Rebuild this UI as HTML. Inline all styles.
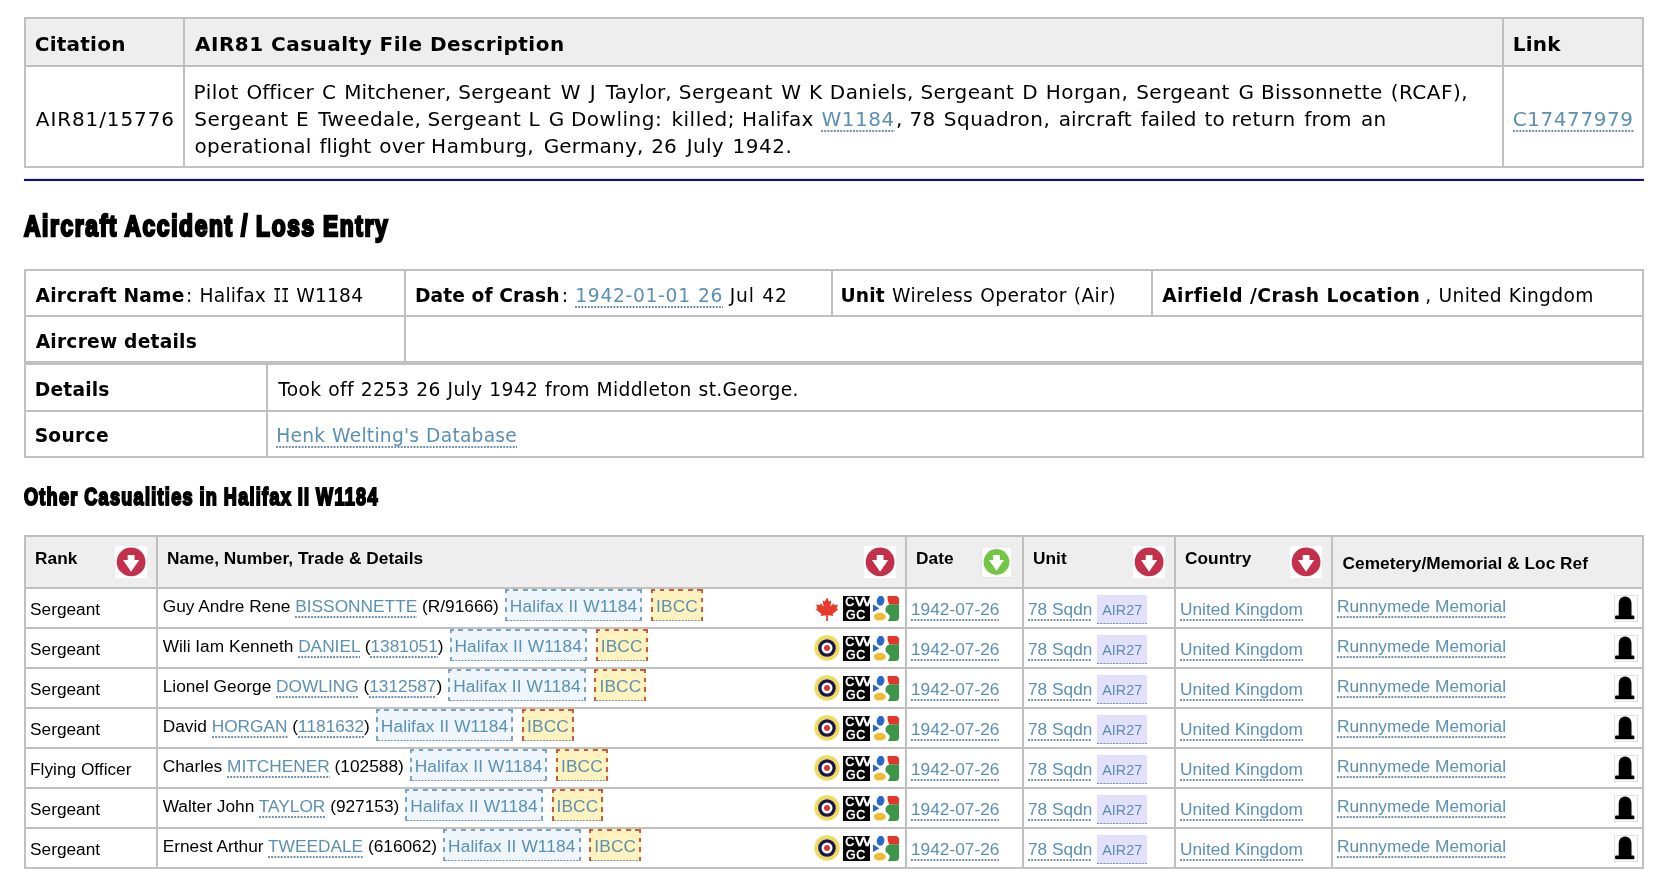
<!DOCTYPE html>
<html lang="en">
<head>
<meta charset="utf-8">
<title>Aircraft Accident / Loss Entry</title>
<style>
html,body{margin:0;padding:0;background:#fff;}
body{width:1668px;height:891px;position:relative;overflow:hidden;will-change:transform;font-family:"DejaVu Sans","Liberation Sans",sans-serif;font-size:20px;color:#000;}
a{color:#5b90b5;text-decoration:none;padding-bottom:2px;background:repeating-linear-gradient(90deg,rgba(112,142,168,.5) 0,rgb(112,142,168) .5px,rgb(112,142,168) 1.4px,rgba(112,142,168,0) 2.4px,rgba(112,142,168,0) 2.7px,rgba(112,142,168,.5) 3.2px) 0 100%/100% 2px no-repeat;}
table{border-collapse:collapse;table-layout:fixed;position:absolute;}
td,th{border:2px solid #c0c0c0;padding:0 0 0 10px;text-align:left;vertical-align:middle;box-sizing:border-box;overflow:hidden;white-space:nowrap;}
th{background:#eee;font-weight:bold;}
.v{font-family:"DejaVu Sans","Liberation Sans",sans-serif;font-size:20px;}
.r{position:absolute;white-space:pre;line-height:24px;font-size:20px;}
#t2 .r,#t3 .r{line-height:21px;font-size:18.67px;}
.r.ii{font-family:"DejaVu Sans Mono","DejaVu Sans",monospace;transform:scaleX(0.75);transform-origin:0 50%;}
.r a{display:inline-block;line-height:22px;vertical-align:baseline;}
#t2 .r a,#t3 .r a{line-height:21px;}
h2,h3{position:absolute;margin:0;font-family:"Liberation Sans",sans-serif;font-weight:bold;white-space:nowrap;transform-origin:0 50%;color:#000;}
#h2{left:24px;top:206px;font-size:30px;line-height:40px;-webkit-text-stroke:2.6px #000;letter-spacing:2.2px;word-spacing:-1px;transform:scaleX(0.757);}
#h3{left:24px;top:481px;font-size:24.2px;line-height:32px;-webkit-text-stroke:2.1px #000;letter-spacing:1.75px;word-spacing:-0.8px;transform:scaleX(0.745);}
#t1{left:24px;top:17px;width:1618px;}
#t2{left:24px;top:269px;width:1618px;font-size:18.67px;}
#t3{left:24px;top:363px;width:1618px;font-size:18.67px;}
#hr{position:absolute;left:24px;top:178px;width:1620px;height:3px;background:linear-gradient(180deg,#e4e4fa 0,#e4e4fa 1px,#0c0c8c 1px,#0c0c8c 3px);}

#t4{left:24px;top:535px;width:1618px;font-family:"Liberation Sans",sans-serif;font-size:17.3px;}
#t4 th{padding:0 8px 0 9px;letter-spacing:0.04px;font-size:17.25px;vertical-align:top;height:52px;line-height:20px;position:relative;}
#t4 th .tx{display:block;padding-top:11px;}
#t4 th.lo .tx{padding-top:16px;padding-left:0.5px;}
#t4 th .si{position:absolute;right:9px;top:9px;width:32px;height:32px;}
#t4 th .si svg{display:block;}
#t4 td{padding:0 0 0 4px;vertical-align:top;height:40px;line-height:20px;}
#t4 td.rk,#t4 td.c{padding-top:10px;}
#t4 td.nm{padding-top:0;padding-left:4.7px;position:relative;}
.bd.hx{margin-left:1.2px;}
#t4 td.cm{padding-top:7px;position:relative;}
.bd{display:inline-block;box-sizing:border-box;height:32px;line-height:20px;letter-spacing:0.12px;padding:7px 5px 0 5px;margin:0 2px;vertical-align:baseline;background:repeating-linear-gradient(90deg,#7da3c2 0,#7da3c2 4.75px,transparent 4.75px,transparent 9.5px) -1px 0/calc(100% + 1px) 2px no-repeat,repeating-linear-gradient(180deg,#7da3c2 0,#7da3c2 4.75px,transparent 4.75px,transparent 9.5px) 0 -1px/2px calc(100% + 1px) no-repeat,repeating-linear-gradient(180deg,#7da3c2 0,#7da3c2 4.75px,transparent 4.75px,transparent 9.5px) 100% -1px/2px calc(100% + 1px) no-repeat,repeating-linear-gradient(90deg,rgba(112,142,168,.5) 0,rgb(112,142,168) .5px,rgb(112,142,168) 1.4px,rgba(112,142,168,0) 2.4px,rgba(112,142,168,0) 2.7px,rgba(112,142,168,.5) 3.2px) 2px 100%/calc(100% - 4px) 1.4px no-repeat,#eef6fc;}
.bd.ib{background:repeating-linear-gradient(90deg,#cc5a3c 0,#cc5a3c 4.75px,transparent 4.75px,transparent 9.5px) -1px 0/calc(100% + 1px) 2px no-repeat,repeating-linear-gradient(180deg,#cc5a3c 0,#cc5a3c 4.75px,transparent 4.75px,transparent 9.5px) 0 -1px/2px calc(100% + 1px) no-repeat,repeating-linear-gradient(180deg,#cc5a3c 0,#cc5a3c 4.75px,transparent 4.75px,transparent 9.5px) 100% -1px/2px calc(100% + 1px) no-repeat,repeating-linear-gradient(90deg,rgba(112,142,168,.5) 0,rgb(112,142,168) .5px,rgb(112,142,168) 1.4px,rgba(112,142,168,0) 2.4px,rgba(112,142,168,0) 2.7px,rgba(112,142,168,.5) 3.2px) 2px 100%/calc(100% - 4px) 1.4px no-repeat,#fef3be;}
.air{font-size:14.4px;padding:7px 4.5px 6px 5px;background:repeating-linear-gradient(90deg,rgba(112,142,168,.5) 0,rgb(112,142,168) .5px,rgb(112,142,168) 1.4px,rgba(112,142,168,0) 2.4px,rgba(112,142,168,0) 2.7px,rgba(112,142,168,.5) 3.2px) 0 100%/100% 1.5px no-repeat,#e2e0fa;}
.icons{position:absolute;right:0;top:0;height:38px;width:100px;}
.ic{position:absolute;display:block;}
.fl{left:10px;top:7.6px;height:24.4px;width:24px;}
.rf{left:9.2px;top:6.3px;}
.cw{left:38px;top:7px;width:27px;height:25px;background:#000;color:#fff;font-family:"Liberation Sans",sans-serif;font-weight:normal;-webkit-text-stroke:0.5px #fff;font-size:12.3px;line-height:12.4px;overflow:hidden;letter-spacing:0.5px;white-space:nowrap;}
.cw span{display:block;padding-left:2.2px;position:relative;top:0.3px;}
.cw .g2{padding-left:3px;letter-spacing:0.6px;}
.cw i{font-style:normal;display:inline-block;transform:scaleX(1.45);transform-origin:0 50%;}
.gg{left:68px;top:7px;}
.tb{position:absolute;right:4.5px;top:5.7px;width:23.5px;height:27px;box-sizing:border-box;box-shadow:inset 0 0 0 1px #e2e2e2;background:#fff;}
.tb svg{position:absolute;left:0;top:0;}
</style>
</head>
<body>

<table id="t1" class="v">
<colgroup><col style="width:159px"><col style="width:1319px"><col style="width:140px"></colgroup>
<tr style="height:48px"><th><b class="r" style="left:9.76px;top:14px;letter-spacing:0.240px;">Citation</b></th><th><b class="r" style="left:170.00px;top:14px;letter-spacing:0.484px;">AIR81 Casualty File Description</b></th><th><b class="r" style="left:1487.64px;top:14px;letter-spacing:0.258px;">Link</b></th></tr>
<tr style="height:101px"><td><span class="r" style="left:10.80px;top:89px;letter-spacing:0.898px;">AIR81/15776</span></td><td><span class="r" style="left:168.62px;top:62px;letter-spacing:0.500px">Pilot</span> <span class="r" style="left:221.46px;top:62px;letter-spacing:0.050px">Officer</span> <span class="r" style="left:297.06px;top:62px;letter-spacing:0.000px">C</span> <span class="r" style="left:319.23px;top:62px;letter-spacing:0.073px">Mitchener,</span> <span class="r" style="left:433.25px;top:62px;letter-spacing:0.292px">Sergeant</span> <span class="r" style="left:535.77px;top:62px;letter-spacing:0.000px">W</span> <span class="r" style="left:564.85px;top:62px;letter-spacing:0.000px">J</span> <span class="r" style="left:580.81px;top:62px;letter-spacing:0.081px">Taylor,</span> <span class="r" style="left:653.85px;top:62px;letter-spacing:0.407px">Sergeant</span> <span class="r" style="left:756.17px;top:62px;letter-spacing:0.000px">W</span> <span class="r" style="left:784.12px;top:62px;letter-spacing:0.000px">K</span> <span class="r" style="left:804.83px;top:62px;letter-spacing:0.445px">Daniels,</span> <span class="r" style="left:895.55px;top:62px;letter-spacing:0.378px">Sergeant</span> <span class="r" style="left:997.22px;top:62px;letter-spacing:0.000px">D</span> <span class="r" style="left:1020.72px;top:62px;letter-spacing:0.500px">Horgan,</span> <span class="r" style="left:1111.25px;top:62px;letter-spacing:0.364px">Sergeant</span> <span class="r" style="left:1213.46px;top:62px;letter-spacing:0.000px">G</span> <span class="r" style="left:1236.03px;top:62px;letter-spacing:0.333px">Bissonnette</span> <span class="r" style="left:1365.64px;top:62px;letter-spacing:0.500px">(RCAF),</span><br><span class="r" style="left:169.25px;top:89px;letter-spacing:0.450px">Sergeant</span> <span class="r" style="left:270.93px;top:89px;letter-spacing:0.000px">E</span> <span class="r" style="left:293.21px;top:89px;letter-spacing:0.452px">Tweedale,</span> <span class="r" style="left:402.45px;top:89px;letter-spacing:0.378px">Sergeant</span> <span class="r" style="left:503.62px;top:89px;letter-spacing:0.000px">L</span> <span class="r" style="left:523.66px;top:89px;letter-spacing:0.000px">G</span> <span class="r" style="left:545.92px;top:89px;letter-spacing:0.500px">Dowling:</span> <span class="r" style="left:646.44px;top:89px;letter-spacing:0.500px">killed;</span> <span class="r" style="left:717.12px;top:89px;letter-spacing:0.287px">Halifax</span> <span class="r" style="left:796.48px;top:89px;letter-spacing:0.500px"><a>W1184</a></span><span class="r" style="left:870.95px;top:89px;letter-spacing:0.000px">,</span> <span class="r" style="left:884.44px;top:89px;letter-spacing:0.250px">78</span> <span class="r" style="left:918.75px;top:89px;letter-spacing:0.500px">Squadron,</span> <span class="r" style="left:1033.66px;top:89px;letter-spacing:0.197px">aircraft</span> <span class="r" style="left:1115.69px;top:89px;letter-spacing:0.050px">failed</span> <span class="r" style="left:1179.49px;top:89px;letter-spacing:0.250px">to</span> <span class="r" style="left:1206.44px;top:89px;letter-spacing:0.500px">return</span> <span class="r" style="left:1279.29px;top:89px;letter-spacing:0.250px">from</span> <span class="r" style="left:1335.96px;top:89px;letter-spacing:0.250px">an</span><br><span class="r" style="left:169.56px;top:116px;letter-spacing:0.301px">operational</span> <span class="r" style="left:294.39px;top:116px;letter-spacing:0.077px">flight</span> <span class="r" style="left:354.16px;top:116px;letter-spacing:0.250px">over</span> <span class="r" style="left:406.12px;top:116px;letter-spacing:0.500px">Hamburg,</span> <span class="r" style="left:518.66px;top:116px;letter-spacing:0.189px">Germany,</span> <span class="r" style="left:626.15px;top:116px;letter-spacing:0.250px">26</span> <span class="r" style="left:661.85px;top:116px;letter-spacing:0.250px">July</span> <span class="r" style="left:707.51px;top:116px;letter-spacing:0.500px">1942.</span></td><td><span class="r" style="left:1487.66px;top:89px;letter-spacing:0.580px;"><a>C17477979</a></span></td></tr>
</table>
<div id="hr"></div>

<h2 id="h2">Aircraft Accident / Loss Entry</h2>

<table id="t2" class="v">
<colgroup><col style="width:380px"><col style="width:427px"><col style="width:320px"><col style="width:491px"></colgroup>
<tr style="height:46px"><td><b class="r" style="left:10.60px;top:15px;letter-spacing:0.174px;">Aircraft Name</b><span class="r" style="left:161.06px;top:15px;letter-spacing:0.268px;word-spacing:0.60px;">: Halifax</span> <span class="r ii" style="left:247.79px;top:15px;letter-spacing:-0.71px">II</span> <span class="r" style="left:271.32px;top:15px;letter-spacing:0.201px;">W1184</span></td><td><b class="r" style="left:389.94px;top:15px;letter-spacing:0.095px;">Date of Crash</b><span class="r" style="left:536.76px;top:15px;letter-spacing:0.000px;">:</span> <span class="r" style="left:550.26px;top:15px;letter-spacing:0.703px;word-spacing:0.60px;"><a>1942-01-01 26</a></span> <span class="r" style="left:704.67px;top:15px;letter-spacing:0.877px;word-spacing:0.60px;">Jul 42</span></td><td><b class="r" style="left:815.44px;top:15px;letter-spacing:0.185px;">Unit</b> <span class="r" style="left:867.02px;top:15px;letter-spacing:0.394px;word-spacing:0.60px;">Wireless Operator (Air)</span></td><td><b class="r" style="left:1137.20px;top:15px;letter-spacing:0.485px;">Airfield /Crash Location</b> <span class="r" style="left:1400.33px;top:15px;letter-spacing:0.354px;word-spacing:0.60px;">, United Kingdom</span></td></tr>
<tr style="height:46px"><td><b class="r" style="left:10.70px;top:61px;letter-spacing:0.215px;">Aircrew details</b></td><td colspan="3"></td></tr>
</table>

<table id="t3" class="v">
<colgroup><col style="width:242px"><col style="width:1376px"></colgroup>
<tr style="height:47px"><td><b class="r" style="left:9.74px;top:15px;letter-spacing:0.196px;">Details</b></td><td><span class="r" style="left:253.29px;top:15px;letter-spacing:0.329px;word-spacing:0.60px;">Took off 2253 26 July 1942 from Middleton st.George.</span></td></tr>
<tr style="height:46px"><td><b class="r" style="left:9.63px;top:61px;letter-spacing:0.294px;">Source</b></td><td><span class="r" style="left:251.25px;top:61px;letter-spacing:0.242px;word-spacing:0.60px;"><a>Henk Welting's Database</a></span></td></tr>
</table>

<h3 id="h3">Other Casualities in Halifax II W1184</h3>

<table id="t4">
<colgroup><col style="width:132px"><col style="width:749px"><col style="width:117px"><col style="width:152px"><col style="width:157px"><col style="width:311px"></colgroup>
<tr><th><span class="tx">Rank</span><span class="si"><svg width="32" height="32" viewBox="0 0 32 32"><rect width="32" height="32" fill="#fff"/><circle cx="16.1" cy="15.9" r="14.4" fill="#c4304b"/><path d="M12.7 8.9h6.8v5.1h4.7L16.1 25.7 8 14h4.7z" fill="#fff"/></svg></span></th><th><span class="tx">Name, Number, Trade &amp; Details</span><span class="si"><svg width="32" height="32" viewBox="0 0 32 32"><rect width="32" height="32" fill="#fff"/><circle cx="16.1" cy="15.9" r="14.4" fill="#c4304b"/><path d="M12.7 8.9h6.8v5.1h4.7L16.1 25.7 8 14h4.7z" fill="#fff"/></svg></span></th><th><span class="tx">Date</span><span class="si"><svg width="32" height="32" viewBox="0 0 32 32"><rect x="0.6" y="1" width="30.4" height="30.4" fill="#fff" stroke="#e3e3e3" stroke-width="1"/><circle cx="15.5" cy="16" r="12.9" fill="#72c643"/><path d="M12.1 8.9h6.8v5.1h4.2L15.5 24.8 7.9 14h4.2z" fill="#fff"/></svg></span></th><th><span class="tx">Unit</span><span class="si"><svg width="32" height="32" viewBox="0 0 32 32"><rect width="32" height="32" fill="#fff"/><circle cx="16.1" cy="15.9" r="14.4" fill="#c4304b"/><path d="M12.7 8.9h6.8v5.1h4.7L16.1 25.7 8 14h4.7z" fill="#fff"/></svg></span></th><th><span class="tx">Country</span><span class="si"><svg width="32" height="32" viewBox="0 0 32 32"><rect width="32" height="32" fill="#fff"/><circle cx="16.1" cy="15.9" r="14.4" fill="#c4304b"/><path d="M12.7 8.9h6.8v5.1h4.7L16.1 25.7 8 14h4.7z" fill="#fff"/></svg></span></th><th class="lo"><span class="tx">Cemetery/Memorial &amp; Loc Ref</span></th></tr>
<tr><td class="rk">Sergeant</td><td class="nm"><span class="icons"><svg class="ic fl" width="24" height="24" viewBox="0 0 24 24"><path fill="#e8392b" d="M12 0.3 L14.1 4.4 L16.3 3.3 L15.4 9.2 L18.4 6.1 L19.1 8 L22.9 7.3 L21.6 11.2 L23.4 12 L17.6 16.8 L18.3 18.9 L12.8 18 L12.9 24 L11.1 24 L11.2 18 L5.7 18.9 L6.4 16.8 L0.6 12 L2.4 11.2 L1.1 7.3 L4.9 8 L5.6 6.1 L8.6 9.2 L7.7 3.3 L9.9 4.4 Z"/></svg><span class="ic cw"><span>C<i>W</i></span><span class="g2">GC</span></span><svg class="ic gg" width="26" height="25" viewBox="0 0 26 25"><path d="M0 0H22a4 4 0 0 1 4 4V21a4 4 0 0 1 -4 4H0z" fill="#fff"/><path d="M14.6 0H22.5a3.5 3.5 0 0 1 3.5 3.5V8.3H16.2C15 5.6 14.2 2.8 14.6 0z" fill="#e5352a"/><path d="M26 8.2V21.5a3.5 3.5 0 0 1 -3.5 3.5H14.6c1.6-1.8 2.6-3.8 1.7-5.8c-0.8-1.6-3.6-2.4-3.9-5c-0.2-2.6 1.4-4.8 4-6z" fill="#3c9647"/><ellipse cx="7.6" cy="4.8" rx="3.8" ry="5" fill="#2c68cc" transform="rotate(8 7.6 4.8)"/><path d="M0 8.6L6.4 12.3L0 15.9z" fill="#2d62c0"/><ellipse cx="6.9" cy="20.7" rx="6" ry="3.9" fill="#efbb33"/></svg></span>Guy Andre Rene <a>BISSONNETTE</a> (R/91666) <a class="bd hx">Halifax II W1184</a> <a class="bd ib">IBCC</a></td><td class="c"><a>1942-07-26</a></td><td class="c"><a>78 Sqdn</a> <a class="air">AIR27</a></td><td class="c"><a>United Kingdom</a></td><td class="cm"><span class="tb"><svg width="23.5" height="27" viewBox="0 0 23.5 27"><path d="M4.7 20.4V7.8a6.4 6.4 0 0 1 12.8 0V20.4H19.4a1 1 0 0 1 1 1V23.3a1 1 0 0 1 -1 1H2.1a1 1 0 0 1 -1 -1V21.4a1 1 0 0 1 1 -1z" fill="#000"/></svg></span><a>Runnymede Memorial</a></td></tr>
<tr><td class="rk">Sergeant</td><td class="nm"><span class="icons"><svg class="ic rf" width="26" height="26" viewBox="0 0 26 26"><circle cx="13" cy="13" r="12.7" fill="#efdc5e"/><circle cx="13" cy="13" r="8.8" fill="#15154f"/><circle cx="13" cy="13" r="5.5" fill="#fff"/><circle cx="13" cy="13" r="3" fill="#d8382d"/></svg><span class="ic cw"><span>C<i>W</i></span><span class="g2">GC</span></span><svg class="ic gg" width="26" height="25" viewBox="0 0 26 25"><path d="M0 0H22a4 4 0 0 1 4 4V21a4 4 0 0 1 -4 4H0z" fill="#fff"/><path d="M14.6 0H22.5a3.5 3.5 0 0 1 3.5 3.5V8.3H16.2C15 5.6 14.2 2.8 14.6 0z" fill="#e5352a"/><path d="M26 8.2V21.5a3.5 3.5 0 0 1 -3.5 3.5H14.6c1.6-1.8 2.6-3.8 1.7-5.8c-0.8-1.6-3.6-2.4-3.9-5c-0.2-2.6 1.4-4.8 4-6z" fill="#3c9647"/><ellipse cx="7.6" cy="4.8" rx="3.8" ry="5" fill="#2c68cc" transform="rotate(8 7.6 4.8)"/><path d="M0 8.6L6.4 12.3L0 15.9z" fill="#2d62c0"/><ellipse cx="6.9" cy="20.7" rx="6" ry="3.9" fill="#efbb33"/></svg></span>Wili Iam Kenneth <a>DANIEL</a> (<a>1381051</a>) <a class="bd hx">Halifax II W1184</a> <a class="bd ib">IBCC</a></td><td class="c"><a>1942-07-26</a></td><td class="c"><a>78 Sqdn</a> <a class="air">AIR27</a></td><td class="c"><a>United Kingdom</a></td><td class="cm"><span class="tb"><svg width="23.5" height="27" viewBox="0 0 23.5 27"><path d="M4.7 20.4V7.8a6.4 6.4 0 0 1 12.8 0V20.4H19.4a1 1 0 0 1 1 1V23.3a1 1 0 0 1 -1 1H2.1a1 1 0 0 1 -1 -1V21.4a1 1 0 0 1 1 -1z" fill="#000"/></svg></span><a>Runnymede Memorial</a></td></tr>
<tr><td class="rk">Sergeant</td><td class="nm"><span class="icons"><svg class="ic rf" width="26" height="26" viewBox="0 0 26 26"><circle cx="13" cy="13" r="12.7" fill="#efdc5e"/><circle cx="13" cy="13" r="8.8" fill="#15154f"/><circle cx="13" cy="13" r="5.5" fill="#fff"/><circle cx="13" cy="13" r="3" fill="#d8382d"/></svg><span class="ic cw"><span>C<i>W</i></span><span class="g2">GC</span></span><svg class="ic gg" width="26" height="25" viewBox="0 0 26 25"><path d="M0 0H22a4 4 0 0 1 4 4V21a4 4 0 0 1 -4 4H0z" fill="#fff"/><path d="M14.6 0H22.5a3.5 3.5 0 0 1 3.5 3.5V8.3H16.2C15 5.6 14.2 2.8 14.6 0z" fill="#e5352a"/><path d="M26 8.2V21.5a3.5 3.5 0 0 1 -3.5 3.5H14.6c1.6-1.8 2.6-3.8 1.7-5.8c-0.8-1.6-3.6-2.4-3.9-5c-0.2-2.6 1.4-4.8 4-6z" fill="#3c9647"/><ellipse cx="7.6" cy="4.8" rx="3.8" ry="5" fill="#2c68cc" transform="rotate(8 7.6 4.8)"/><path d="M0 8.6L6.4 12.3L0 15.9z" fill="#2d62c0"/><ellipse cx="6.9" cy="20.7" rx="6" ry="3.9" fill="#efbb33"/></svg></span>Lionel George <a>DOWLING</a> (<a>1312587</a>) <a class="bd hx">Halifax II W1184</a> <a class="bd ib">IBCC</a></td><td class="c"><a>1942-07-26</a></td><td class="c"><a>78 Sqdn</a> <a class="air">AIR27</a></td><td class="c"><a>United Kingdom</a></td><td class="cm"><span class="tb"><svg width="23.5" height="27" viewBox="0 0 23.5 27"><path d="M4.7 20.4V7.8a6.4 6.4 0 0 1 12.8 0V20.4H19.4a1 1 0 0 1 1 1V23.3a1 1 0 0 1 -1 1H2.1a1 1 0 0 1 -1 -1V21.4a1 1 0 0 1 1 -1z" fill="#000"/></svg></span><a>Runnymede Memorial</a></td></tr>
<tr><td class="rk">Sergeant</td><td class="nm"><span class="icons"><svg class="ic rf" width="26" height="26" viewBox="0 0 26 26"><circle cx="13" cy="13" r="12.7" fill="#efdc5e"/><circle cx="13" cy="13" r="8.8" fill="#15154f"/><circle cx="13" cy="13" r="5.5" fill="#fff"/><circle cx="13" cy="13" r="3" fill="#d8382d"/></svg><span class="ic cw"><span>C<i>W</i></span><span class="g2">GC</span></span><svg class="ic gg" width="26" height="25" viewBox="0 0 26 25"><path d="M0 0H22a4 4 0 0 1 4 4V21a4 4 0 0 1 -4 4H0z" fill="#fff"/><path d="M14.6 0H22.5a3.5 3.5 0 0 1 3.5 3.5V8.3H16.2C15 5.6 14.2 2.8 14.6 0z" fill="#e5352a"/><path d="M26 8.2V21.5a3.5 3.5 0 0 1 -3.5 3.5H14.6c1.6-1.8 2.6-3.8 1.7-5.8c-0.8-1.6-3.6-2.4-3.9-5c-0.2-2.6 1.4-4.8 4-6z" fill="#3c9647"/><ellipse cx="7.6" cy="4.8" rx="3.8" ry="5" fill="#2c68cc" transform="rotate(8 7.6 4.8)"/><path d="M0 8.6L6.4 12.3L0 15.9z" fill="#2d62c0"/><ellipse cx="6.9" cy="20.7" rx="6" ry="3.9" fill="#efbb33"/></svg></span>David <a>HORGAN</a> (<a>1181632</a>) <a class="bd hx">Halifax II W1184</a> <a class="bd ib">IBCC</a></td><td class="c"><a>1942-07-26</a></td><td class="c"><a>78 Sqdn</a> <a class="air">AIR27</a></td><td class="c"><a>United Kingdom</a></td><td class="cm"><span class="tb"><svg width="23.5" height="27" viewBox="0 0 23.5 27"><path d="M4.7 20.4V7.8a6.4 6.4 0 0 1 12.8 0V20.4H19.4a1 1 0 0 1 1 1V23.3a1 1 0 0 1 -1 1H2.1a1 1 0 0 1 -1 -1V21.4a1 1 0 0 1 1 -1z" fill="#000"/></svg></span><a>Runnymede Memorial</a></td></tr>
<tr><td class="rk">Flying Officer</td><td class="nm"><span class="icons"><svg class="ic rf" width="26" height="26" viewBox="0 0 26 26"><circle cx="13" cy="13" r="12.7" fill="#efdc5e"/><circle cx="13" cy="13" r="8.8" fill="#15154f"/><circle cx="13" cy="13" r="5.5" fill="#fff"/><circle cx="13" cy="13" r="3" fill="#d8382d"/></svg><span class="ic cw"><span>C<i>W</i></span><span class="g2">GC</span></span><svg class="ic gg" width="26" height="25" viewBox="0 0 26 25"><path d="M0 0H22a4 4 0 0 1 4 4V21a4 4 0 0 1 -4 4H0z" fill="#fff"/><path d="M14.6 0H22.5a3.5 3.5 0 0 1 3.5 3.5V8.3H16.2C15 5.6 14.2 2.8 14.6 0z" fill="#e5352a"/><path d="M26 8.2V21.5a3.5 3.5 0 0 1 -3.5 3.5H14.6c1.6-1.8 2.6-3.8 1.7-5.8c-0.8-1.6-3.6-2.4-3.9-5c-0.2-2.6 1.4-4.8 4-6z" fill="#3c9647"/><ellipse cx="7.6" cy="4.8" rx="3.8" ry="5" fill="#2c68cc" transform="rotate(8 7.6 4.8)"/><path d="M0 8.6L6.4 12.3L0 15.9z" fill="#2d62c0"/><ellipse cx="6.9" cy="20.7" rx="6" ry="3.9" fill="#efbb33"/></svg></span>Charles <a>MITCHENER</a> (102588) <a class="bd hx">Halifax II W1184</a> <a class="bd ib">IBCC</a></td><td class="c"><a>1942-07-26</a></td><td class="c"><a>78 Sqdn</a> <a class="air">AIR27</a></td><td class="c"><a>United Kingdom</a></td><td class="cm"><span class="tb"><svg width="23.5" height="27" viewBox="0 0 23.5 27"><path d="M4.7 20.4V7.8a6.4 6.4 0 0 1 12.8 0V20.4H19.4a1 1 0 0 1 1 1V23.3a1 1 0 0 1 -1 1H2.1a1 1 0 0 1 -1 -1V21.4a1 1 0 0 1 1 -1z" fill="#000"/></svg></span><a>Runnymede Memorial</a></td></tr>
<tr><td class="rk">Sergeant</td><td class="nm"><span class="icons"><svg class="ic rf" width="26" height="26" viewBox="0 0 26 26"><circle cx="13" cy="13" r="12.7" fill="#efdc5e"/><circle cx="13" cy="13" r="8.8" fill="#15154f"/><circle cx="13" cy="13" r="5.5" fill="#fff"/><circle cx="13" cy="13" r="3" fill="#d8382d"/></svg><span class="ic cw"><span>C<i>W</i></span><span class="g2">GC</span></span><svg class="ic gg" width="26" height="25" viewBox="0 0 26 25"><path d="M0 0H22a4 4 0 0 1 4 4V21a4 4 0 0 1 -4 4H0z" fill="#fff"/><path d="M14.6 0H22.5a3.5 3.5 0 0 1 3.5 3.5V8.3H16.2C15 5.6 14.2 2.8 14.6 0z" fill="#e5352a"/><path d="M26 8.2V21.5a3.5 3.5 0 0 1 -3.5 3.5H14.6c1.6-1.8 2.6-3.8 1.7-5.8c-0.8-1.6-3.6-2.4-3.9-5c-0.2-2.6 1.4-4.8 4-6z" fill="#3c9647"/><ellipse cx="7.6" cy="4.8" rx="3.8" ry="5" fill="#2c68cc" transform="rotate(8 7.6 4.8)"/><path d="M0 8.6L6.4 12.3L0 15.9z" fill="#2d62c0"/><ellipse cx="6.9" cy="20.7" rx="6" ry="3.9" fill="#efbb33"/></svg></span>Walter John <a>TAYLOR</a> (927153) <a class="bd hx">Halifax II W1184</a> <a class="bd ib">IBCC</a></td><td class="c"><a>1942-07-26</a></td><td class="c"><a>78 Sqdn</a> <a class="air">AIR27</a></td><td class="c"><a>United Kingdom</a></td><td class="cm"><span class="tb"><svg width="23.5" height="27" viewBox="0 0 23.5 27"><path d="M4.7 20.4V7.8a6.4 6.4 0 0 1 12.8 0V20.4H19.4a1 1 0 0 1 1 1V23.3a1 1 0 0 1 -1 1H2.1a1 1 0 0 1 -1 -1V21.4a1 1 0 0 1 1 -1z" fill="#000"/></svg></span><a>Runnymede Memorial</a></td></tr>
<tr><td class="rk">Sergeant</td><td class="nm"><span class="icons"><svg class="ic rf" width="26" height="26" viewBox="0 0 26 26"><circle cx="13" cy="13" r="12.7" fill="#efdc5e"/><circle cx="13" cy="13" r="8.8" fill="#15154f"/><circle cx="13" cy="13" r="5.5" fill="#fff"/><circle cx="13" cy="13" r="3" fill="#d8382d"/></svg><span class="ic cw"><span>C<i>W</i></span><span class="g2">GC</span></span><svg class="ic gg" width="26" height="25" viewBox="0 0 26 25"><path d="M0 0H22a4 4 0 0 1 4 4V21a4 4 0 0 1 -4 4H0z" fill="#fff"/><path d="M14.6 0H22.5a3.5 3.5 0 0 1 3.5 3.5V8.3H16.2C15 5.6 14.2 2.8 14.6 0z" fill="#e5352a"/><path d="M26 8.2V21.5a3.5 3.5 0 0 1 -3.5 3.5H14.6c1.6-1.8 2.6-3.8 1.7-5.8c-0.8-1.6-3.6-2.4-3.9-5c-0.2-2.6 1.4-4.8 4-6z" fill="#3c9647"/><ellipse cx="7.6" cy="4.8" rx="3.8" ry="5" fill="#2c68cc" transform="rotate(8 7.6 4.8)"/><path d="M0 8.6L6.4 12.3L0 15.9z" fill="#2d62c0"/><ellipse cx="6.9" cy="20.7" rx="6" ry="3.9" fill="#efbb33"/></svg></span>Ernest Arthur <a>TWEEDALE</a> (616062) <a class="bd hx">Halifax II W1184</a> <a class="bd ib">IBCC</a></td><td class="c"><a>1942-07-26</a></td><td class="c"><a>78 Sqdn</a> <a class="air">AIR27</a></td><td class="c"><a>United Kingdom</a></td><td class="cm"><span class="tb"><svg width="23.5" height="27" viewBox="0 0 23.5 27"><path d="M4.7 20.4V7.8a6.4 6.4 0 0 1 12.8 0V20.4H19.4a1 1 0 0 1 1 1V23.3a1 1 0 0 1 -1 1H2.1a1 1 0 0 1 -1 -1V21.4a1 1 0 0 1 1 -1z" fill="#000"/></svg></span><a>Runnymede Memorial</a></td></tr>
</table>

</body>
</html>
